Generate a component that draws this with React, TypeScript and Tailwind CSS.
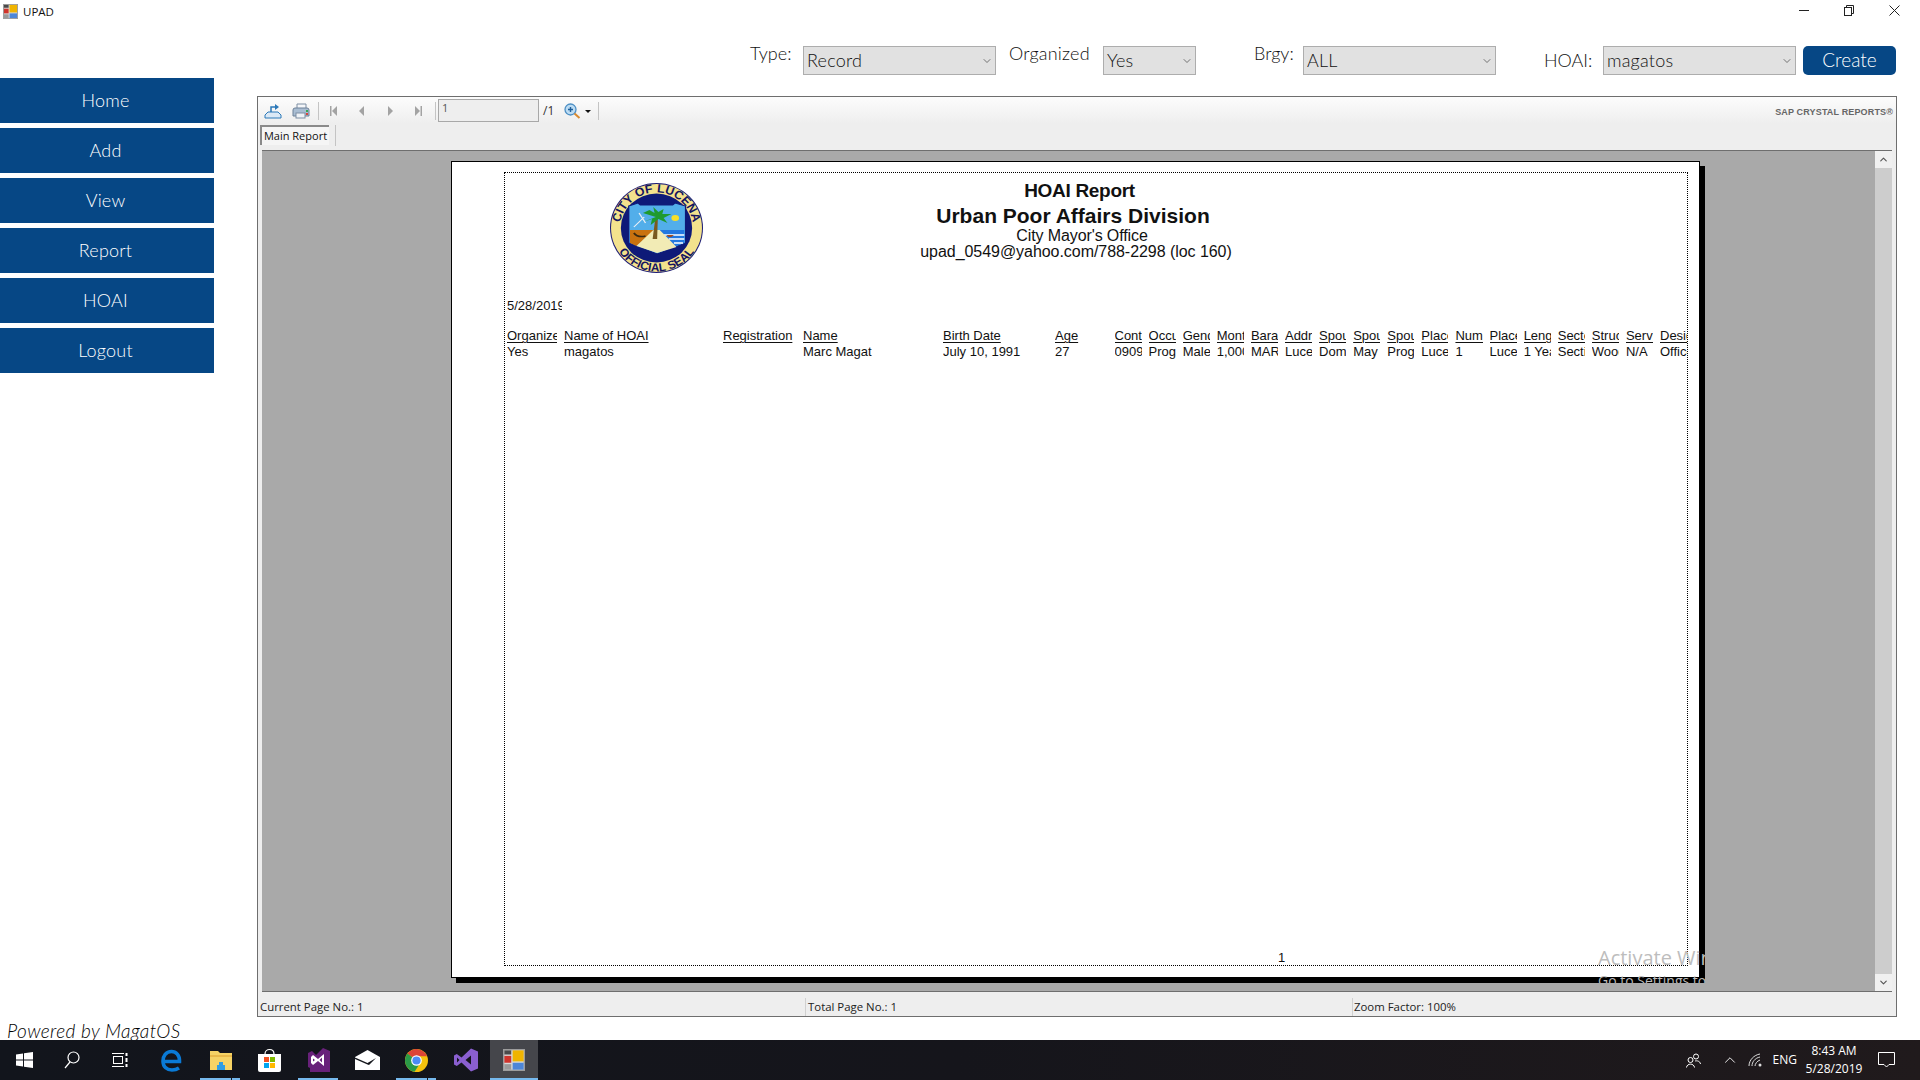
import React from 'react';
import { ChevronDown, ChevronUp } from 'lucide-react';

const navItems = ['Home', 'Add', 'View', 'Report', 'HOAI', 'Logout'];

const reportColumns = [
  ['Organized', 'Yes'],
  ['Name of HOAI', 'magatos'],
  ['Registration', ''],
  ['Name', 'Marc Magat'],
  ['Birth Date', 'July 10, 1991'],
  ['Age', '27'],
  ['Contact', '09091234567'],
  ['Occupation', 'Programmer'],
  ['Gender', 'Male'],
  ['Monthly', '1,000.00'],
  ['Barangay', 'MARKET'],
  ['Address', 'Lucena'],
  ['Spouse', 'Domingo'],
  ['Spouse', 'May'],
  ['Spouse', 'Programmer'],
  ['Place', 'Lucena'],
  ['Number', '1'],
  ['Place', 'Lucena'],
  ['Length', '1 Year'],
  ['Sector', 'Section'],
  ['Structure', 'Wood'],
  ['Service', 'N/A'],
  ['Designation', 'Officer'],
];

const AppIcon = ({ size = 16 }: { size?: number }) => (
  <svg width={size} height={size} viewBox="0 0 16 16">
    <rect x="0.5" y="0.5" width="15" height="15" fill="#d8d8d8" stroke="#9c9c9c" />
    <rect x="1" y="1" width="5" height="3" fill="#4a4a4a" />
    <rect x="1" y="5" width="5" height="5" fill="#d0342c" />
    <rect x="7" y="1" width="8" height="8" fill="#f0b400" />
    <rect x="7" y="10" width="8" height="5" fill="#4d86d8" />
    <rect x="1" y="11" width="5" height="4" fill="#9a9a9a" />
  </svg>
);

const FormSelect = ({ value, className }: { value: string; className: string }) => (
  <div className={`h-[29px] bg-[#e1e1e1] border border-[#adadad] flex items-center justify-between pl-[3px] pr-[2px] text-[18px] font-light text-[#111] ${className}`}>
    <span className="tracking-[0.2px]">{value}</span>
    <ChevronDown size={12} strokeWidth={1.4} className="text-[#444]" />
  </div>
);

const ExportIcon = () => (
  <svg width="18" height="16" viewBox="0 0 18 16" fill="none">
    <path d="M1 12 L4 9 H14 L17 12 V15 H1 Z" fill="#dbe9f6" stroke="#2b78b8" />
    <path d="M7 9 V4 H12" stroke="#2b78b8" strokeWidth="1.5" />
    <path d="M11 1 L15 4 L11 7 Z" fill="#2b78b8" />
  </svg>
);

const PrintIcon = () => (
  <svg width="18" height="16" viewBox="0 0 18 16">
    <path d="M5 1 H14 V6 H5 Z" fill="#f4f6f9" stroke="#7d8ea3" />
    <path d="M1 7 Q1 5 3 5 H15 Q17 5 17 7 V13 H1 Z" fill="#a9bdd2" stroke="#6d8198" />
    <rect x="4" y="10" width="9" height="5" fill="#eef2f6" stroke="#7d8ea3" />
    <rect x="14" y="7" width="2" height="2" fill="#3aa655" />
    <rect x="14" y="10" width="2" height="2" fill="#d8473c" />
  </svg>
);

const NavGlyph = ({ dir, bar }: { dir: 'left' | 'right'; bar?: boolean }) => (
  <svg width="8" height="12" viewBox="0 0 8 12" fill="#a3a3a3">
    {dir === 'left' ? <path d="M7 1 V11 L2 6 Z" /> : <path d="M1 1 V11 L6 6 Z" />}
    {bar && (dir === 'left' ? <rect x="0" y="1" width="1.5" height="10" /> : <rect x="6.5" y="1" width="1.5" height="10" />)}
  </svg>
);

const ZoomIcon = () => (
  <svg width="17" height="16" viewBox="0 0 17 16" fill="none">
    <circle cx="6.5" cy="6.5" r="5.5" fill="#bcdcf3" stroke="#4d8fc4" strokeWidth="1.3" />
    <path d="M4 6.5 H9 M6.5 4 V9" stroke="#1e5f9c" strokeWidth="1.4" />
    <path d="M10.5 10.5 L15.5 15" stroke="#d98a2f" strokeWidth="2" />
  </svg>
);

const CitySeal = () => (
  <svg width="93" height="90" viewBox="1.5 0 90 90" preserveAspectRatio="none" className="shrink-0">
    <defs>
      <path id="sealTop" d="M11 45 A35.5 35.5 0 0 1 82 45" />
      <path id="sealBottom" d="M3 45 A43.5 43.5 0 0 0 90 45" />
    </defs>
    <circle cx="46.5" cy="45" r="45" fill="#1c1c74" />
    <circle cx="46.5" cy="45" r="44" fill="#f3e28d" />
    <circle cx="46.5" cy="45" r="34.5" fill="#0e1a78" />
    <text fontFamily="'Liberation Sans', sans-serif" fontSize="12" fontWeight="700" fill="#14145f">
      <textPath href="#sealTop" startOffset="50%" textAnchor="middle">CITY OF LUCENA</textPath>
    </text>
    <text fontFamily="'Liberation Sans', sans-serif" fontSize="11.5" fontWeight="700" fill="#14145f">
      <textPath href="#sealBottom" startOffset="50%" textAnchor="middle">OFFICIAL SEAL</textPath>
    </text>
    <g transform="translate(46.5 0) scale(1.25 1) translate(-46.5 0)">
      <path d="M25 23 L32 20 L34 22 H59 L61 20 L69 23 V60 L47 71 L25 60 Z" fill="#52aeea" stroke="#0e1a78" />
      <path d="M26 47 H46 L31 63 L26 60 Z" fill="#c9720f" />
      <path d="M48 47 H68 V60 L60 64 Z" fill="#2378e0" />
      <path d="M52 52 H68 M56 56 H68 M60 60 H67" stroke="#fff" strokeWidth="1.5" />
      <path d="M44 47 H49 L62 64 L47 70 L31 63 Z" fill="#f2ebb5" />
      <circle cx="61" cy="35" r="3" fill="#f7e02a" />
      <path d="M45.5 36 L43.5 56 H47 L47.5 36 Z" fill="#7a5a20" />
      <path d="M46 34 L36 30 L41 27 L45 30 L44 24 L48 29 L52 26 L51 31 L58 31 L52 35 L55 40 L48 36 L42 42 L43 36 L36 39 Z" fill="#1f9a2e" />
      <path d="M29 44 L37 34 M33 30 L38 40" stroke="#e8eef6" strokeWidth="1" />
      <path d="M29 50 Q32 55 38 53" stroke="#3b2a10" strokeWidth="1.5" fill="none" />
      <path d="M54 52 H60 L58 54 H56 Z" fill="#a14a20" />
    </g>
  </svg>
);

const WindowsLogo = () => (
  <svg width="17" height="16" viewBox="0 0 17 16" fill="#fff">
    <path d="M0 2.4 L7 1.4 V7.5 H0 Z M8 1.2 L17 0 V7.5 H8 Z M0 8.5 H7 V14.6 L0 13.6 Z M8 8.5 H17 V16 L8 14.8 Z" />
  </svg>
);

const SearchGlyph = () => (
  <svg width="16" height="18" viewBox="0 0 16 18" fill="none" stroke="#fff" strokeWidth="1.2">
    <circle cx="9.5" cy="6.5" r="5.5" />
    <path d="M6 11 L1 17" />
  </svg>
);

const TaskView = () => (
  <svg width="16" height="16" viewBox="0 0 16 16" fill="none" stroke="#fff" strokeWidth="1">
    <rect x="1.5" y="4.5" width="9" height="7" />
    <path d="M0 1.5 H12 M0 14.5 H12" />
    <path d="M14.5 1 V4 M14.5 6 V10 M14.5 12 V15" strokeWidth="2" />
  </svg>
);

const EdgeIcon = () => (
  <svg width="21" height="23" viewBox="0 0 21 23" fill="none">
    <path d="M3 12.5 H18.5 C18.8 6 15 2.5 10.5 2.5 C5 2.5 2 7 2 12 C2 18 6 21 11 21 C14 21 16.5 20 18 19" stroke="#0a7ad6" strokeWidth="3.6" />
  </svg>
);

const ExplorerIcon = () => (
  <svg width="22" height="22" viewBox="0 0 22 22">
    <path d="M0 2 H8 L10 4 H22 V21 H0 Z" fill="#f6d365" />
    <rect x="0" y="6" width="22" height="2" fill="#e9b949" />
    <path d="M7 21 V16 H15 V21 Z" fill="#2f9de3" />
    <rect x="9" y="13" width="4" height="3" fill="#2f9de3" />
  </svg>
);

const StoreIcon = () => (
  <svg width="23" height="24" viewBox="0 0 23 24">
    <path d="M7 6 C7 0 16 0 16 6" fill="none" stroke="#fff" strokeWidth="1.2" />
    <path d="M0 6 H23 V22 Q23 24 21 24 H2 Q0 24 0 22 Z" fill="#fff" />
    <rect x="6" y="9" width="5" height="5" fill="#f25022" />
    <rect x="12" y="9" width="5" height="5" fill="#7fba00" />
    <rect x="6" y="15" width="5" height="5" fill="#00a4ef" />
    <rect x="12" y="15" width="5" height="5" fill="#ffb900" />
  </svg>
);

const VsDarkIcon = () => (
  <svg width="22" height="24" viewBox="0 0 22 24">
    <path d="M15 0 L22 3 V24 H2 V20 L0 19 V5 L4 3 L8 7 Z" fill="#68217a" />
    <path d="M16 6 V18 L10 13 L5 17 L3 15 V9 L5 7 L10 11 Z M14 9.5 L11.5 12 L14 14.5 Z M5 10.5 V13.5 L7 12 Z" fill="#fff" fillRule="evenodd" />
  </svg>
);

const MailIcon = () => (
  <svg width="25" height="20" viewBox="0 0 25 20">
    <path d="M0 7 L12.5 0 L25 7 V20 H0 Z" fill="#fff" />
    <path d="M0 7.5 L12.5 13 L21 8 L14 15 L12.5 14.5 L0 9 Z" fill="#14161c" />
  </svg>
);

const ChromeIcon = () => (
  <svg width="23" height="23" viewBox="0 0 24 24">
    <circle cx="12" cy="12" r="12" fill="#f4c20d" />
    <path d="M12 12 L2.5 4.7 A12 12 0 0 1 23 7.5 L12 7.5 Z" fill="#db4437" />
    <path d="M12 12 L2.5 4.7 A12 12 0 0 0 10 23.8 L15 16 Z" fill="#2a9a47" />
    <circle cx="12" cy="12" r="5.6" fill="#fff" />
    <circle cx="12" cy="12" r="4.3" fill="#4c8bf5" />
  </svg>
);

const VsIcon = () => (
  <svg width="24" height="24" viewBox="0 0 24 24">
    <path d="M17 0.5 L24 3.5 V20.5 L17 23.5 L7.5 14.5 L2.8 18 L0 16.5 V7.5 L2.8 6 L7.5 9.5 Z M17 7.5 L11.5 12 L17 16.5 Z M3 9.5 V14.5 L5.5 12 Z" fill="#8a5fd0" fillRule="evenodd" />
  </svg>
);

const TaskButton = ({ children, running, split }: { children: React.ReactNode; running?: boolean; split?: boolean }) => (
  <div className="relative w-[49px] h-full flex items-center justify-center">
    {children}
    {running && (
      <div className="absolute bottom-0 left-[4px] right-[5px] h-[2px] bg-[#76b9ed]">
        {split && <div className="absolute top-0 bottom-0 right-[8px] w-[1px] bg-[#14161c]" />}
      </div>
    )}
  </div>
);

export default function App() {
  return (
    <div className="w-[1920px] h-[1080px] bg-white flex flex-col overflow-hidden font-['Lato',sans-serif]">
      {/* title bar */}
      <div className="h-[22px] flex items-center pl-[3px] shrink-0">
        <AppIcon size={15} />
        <span className="ml-[5px] mt-[1px] text-[11.5px] text-[#111] font-['Open_Sans',sans-serif]">UPAD</span>
        <div className="ml-auto flex items-center gap-[35px] pr-[20px] mb-[2px]">
          <div className="w-[10px] h-[1px] bg-[#222]" />
          <svg width="10" height="11" viewBox="0 0 10 11" fill="none" stroke="#222">
            <rect x="0.5" y="2.5" width="7" height="8" />
            <path d="M2.5 2.5 V0.5 H9.5 V8.5 H7.5" />
          </svg>
          <svg width="11" height="11" viewBox="0 0 11 11" stroke="#222">
            <path d="M0.5 0.5 L10.5 10.5 M10.5 0.5 L0.5 10.5" />
          </svg>
        </div>
      </div>

      <div className="flex-1 flex min-h-0">
        {/* left menu */}
        <aside className="w-[214px] shrink-0 pt-[56px] flex flex-col">
          <nav className="flex flex-col gap-[5px]">
            {navItems.map((item) => (
              <div key={item} className="h-[45px] bg-[#064785] text-white text-[18px] font-light tracking-[0.2px] pr-[3px] flex items-center justify-center">
                {item}
              </div>
            ))}
          </nav>
          <div className="mt-auto mb-[1px] h-[16px] leading-[16px] pl-[7px] text-[19px] font-light italic tracking-[0.4px] text-black whitespace-nowrap">
            Powered by MagatOS
          </div>
        </aside>

        <main className="ml-[43px] w-[1640px] flex flex-col">
          {/* filters */}
          <div className="mt-[24px] h-[29px] flex pl-[493px] text-[18px] font-light text-[#111] shrink-0">
            <span className="w-[53px] leading-[15px]">Type:</span>
            <FormSelect value="Record" className="w-[193px]" />
            <span className="ml-[13px] w-[94px] leading-[15px] tracking-[0.2px]">Organized</span>
            <FormSelect value="Yes" className="w-[93px]" />
            <span className="ml-[58px] w-[49px] leading-[15px]">Brgy:</span>
            <FormSelect value="ALL" className="w-[193px]" />
            <span className="ml-[48px] w-[59px] leading-[29px]">HOAI:</span>
            <FormSelect value="magatos" className="w-[193px]" />
            <div className="ml-[7px] w-[93px] bg-[#064785] rounded-[5px] text-white text-[19px] flex items-center justify-center">
              Create
            </div>
          </div>

          {/* report viewer */}
          <div className="mt-[21px] h-[921px] border border-[#6e6e6e] bg-[#eeeeee] flex flex-col">
            <div className="h-[27px] shrink-0 bg-gradient-to-b from-[#fcfcfc] to-[#eeeeee] flex items-center pl-[6px] text-[#333]">
              <ExportIcon />
              <div className="ml-[10px]"><PrintIcon /></div>
              <div className="ml-[8px] w-[1px] h-[18px] bg-[#c4c4c4]" />
              <div className="ml-[11px]"><NavGlyph dir="left" bar /></div>
              <div className="ml-[19px]"><NavGlyph dir="left" /></div>
              <div className="ml-[22px]"><NavGlyph dir="right" /></div>
              <div className="ml-[19px]"><NavGlyph dir="right" bar /></div>
              <div className="ml-[13px] w-[1px] h-[18px] bg-[#c4c4c4]" />
              <div className="ml-[2px] w-[101px] h-[23px] border border-[#a8a8a8] bg-[#eeeeee] pl-[3px] text-[11px] leading-[15px] text-[#555] font-['Open_Sans',sans-serif]">1</div>
              <span className="ml-[4px] text-[12px] font-['Open_Sans',sans-serif]">/1</span>
              <div className="ml-[10px]"><ZoomIcon /></div>
              <svg width="6" height="3" viewBox="0 0 6 3" className="ml-[4px] mt-[2px]"><path d="M0 0 H6 L3 3 Z" fill="#111" /></svg>
              <div className="ml-[7px] w-[1px] h-[18px] bg-[#c4c4c4]" />
              <span className="ml-auto mr-[3px] mt-[5px] text-[9px] font-bold tracking-[0.15px] text-[#666] font-['Liberation_Sans',sans-serif] whitespace-nowrap">SAP CRYSTAL REPORTS®</span>
            </div>

            <div className="h-[26px] shrink-0 flex items-start pl-[2px] pt-[1px]">
              <div className="w-[69px] h-[20px] border-l-2 border-t-2 border-[#8a8a8a] bg-[#f5f5f5] text-[11px] leading-[17px] text-center text-[#111] font-['Open_Sans',sans-serif] whitespace-nowrap">
                Main Report
              </div>
              <div className="ml-[6px] w-[1px] h-[21px] bg-[#c4c4c4]" />
            </div>

            <div className="flex-1 min-h-0 ml-[4px] mr-[4px] border-t border-b border-[#6e6e6e] bg-[#a9a9a9] flex">
              <div className="flex-1 min-w-0 pl-[189px] pt-[10px]">
                <div className="relative w-[1254px] h-[822px] overflow-hidden">
                  <div className="w-[1249px] h-[817px] bg-white border border-black shadow-[5px_5px_0_#000] pl-[52px] pt-[10px] font-['Liberation_Sans',sans-serif] text-[#111]">
                    <div className="w-[1184px] h-[794px] border border-dotted border-black flex flex-col">
                      <div className="flex shrink-0">
                        <div className="ml-[105px] mt-[10px]"><CitySeal /></div>
                        <div className="w-[754px] text-center flex flex-col whitespace-nowrap">
                          <div className="mt-[8px] h-[20px] leading-[20px] text-[19px] font-bold tracking-[-0.3px] mr-[1px]">HOAI Report</div>
                          <div className="mt-[3px] mr-[14px] h-[24px] leading-[24px] text-[21px] font-bold">Urban Poor Affairs Division</div>
                          <div className="ml-[4px] h-[16px] leading-[16px] text-[16px] tracking-[-0.1px]">City Mayor's Office</div>
                          <div className="mr-[8px] h-[16px] leading-[16px] text-[16px] tracking-[-0.05px]">upad_0549@yahoo.com/788-2298 (loc 160)</div>
                        </div>
                      </div>

                      <div className="ml-[2px] mt-[25px] w-[55px] h-[16px] leading-[16px] text-[13px] overflow-hidden whitespace-nowrap">5/28/2019</div>

                      <div className="ml-[2px] mt-[14px] grid grid-cols-[50px_152px_73px_133px_105px_52.5px_repeat(17,27.1px)] gap-x-[7px] text-[13px] leading-[16px]">
                        {reportColumns.map(([label], i) => (
                          <div key={`h${i}`} className="h-[16px] overflow-hidden whitespace-nowrap underline decoration-1 underline-offset-[2px]">{label}</div>
                        ))}
                        {reportColumns.map(([, value], i) => (
                          <div key={`v${i}`} className="h-[16px] overflow-hidden whitespace-nowrap">{value}</div>
                        ))}
                      </div>

                      <div className="mt-auto pl-[773px] h-[16px] leading-[17px] text-[13px]">1</div>
                    </div>
                  </div>
                  {/* activation watermark */}
                  <div className="absolute left-[1147px] top-[783px] whitespace-nowrap text-[#bdbdbd] font-['Open_Sans',sans-serif]">
                    <div className="text-[20px] leading-[28px]">Activate Windows</div>
                    <div className="text-[14px] leading-[18px]">Go to Settings to activate Windows.</div>
                  </div>
                </div>
              </div>

              <div className="w-[17px] shrink-0 bg-[#f0f0f0] flex flex-col items-center">
                <div className="h-[17px] flex items-center justify-center"><ChevronUp size={11} strokeWidth={2.5} className="text-[#555]" /></div>
                <div className="w-full flex-1 bg-[#cdcdcd]" />
                <div className="h-[17px] flex items-center justify-center"><ChevronDown size={11} strokeWidth={2.5} className="text-[#555]" /></div>
              </div>
            </div>

            {/* status bar */}
            <div className="h-[24px] shrink-0 flex items-center pl-[2px] pt-[5px] text-[11.4px] text-[#222] font-['Open_Sans',sans-serif] whitespace-nowrap">
              <span className="w-[545px]">Current Page No.: 1</span>
              <div className="w-[1px] h-[18px] bg-[#d0d0d0]" />
              <span className="ml-[2px] w-[544px]">Total Page No.: 1</span>
              <div className="w-[1px] h-[18px] bg-[#d0d0d0]" />
              <span className="ml-[1px]">Zoom Factor: 100%</span>
            </div>
          </div>
        </main>
      </div>

      {/* taskbar */}
      <footer className="h-[40px] shrink-0 bg-gradient-to-r from-[#12151c] via-[#15151b] to-[#201a1c] flex items-center text-white font-['Open_Sans',sans-serif]">
        <div className="w-[48px] h-full flex items-center justify-center"><WindowsLogo /></div>
        <div className="w-[48px] h-full flex items-center justify-center"><SearchGlyph /></div>
        <div className="w-[48px] h-full flex items-center justify-center"><TaskView /></div>
        <div className="ml-[3px] flex h-full">
          <TaskButton><EdgeIcon /></TaskButton>
          <TaskButton running split><ExplorerIcon /></TaskButton>
          <TaskButton><StoreIcon /></TaskButton>
          <TaskButton running><VsDarkIcon /></TaskButton>
          <TaskButton><MailIcon /></TaskButton>
          <TaskButton running split><ChromeIcon /></TaskButton>
          <TaskButton><VsIcon /></TaskButton>
          <div className="relative w-[48px] h-full bg-[#45464b] flex items-center justify-center">
            <AppIcon size={22} />
            <div className="absolute bottom-0 left-0 right-0 h-[2px] bg-[#76b9ed]" />
          </div>
        </div>
        <div className="ml-auto flex items-center h-full">
          <svg width="15" height="15" viewBox="0 0 15 15" fill="none" stroke="#fff" strokeWidth="1">
            <circle cx="10" cy="3.5" r="2.5" />
            <circle cx="4.5" cy="7" r="2.5" />
            <path d="M0.5 14.5 C1 10 8 10 8.5 14.5 M9 8 C11 7.5 14 8 14.5 11" />
          </svg>
          <ChevronUp size={18} strokeWidth={1.2} className="ml-[20px]" />
          <svg width="14" height="14" viewBox="0 0 14 14" fill="none" stroke="#ddd" strokeWidth="1" className="ml-[9px]">
            <path d="M1 13 C1 7 6 2 12 1 M4 13 C4 9 7 5 12 4 M7 13 C7 11 9 8 12 7" />
            <circle cx="12" cy="12" r="1.5" fill="#ddd" stroke="none" />
          </svg>
          <span className="ml-[11px] text-[12px]">ENG</span>
          <div className="ml-[10px] w-[54px] flex flex-col items-center text-[12px] leading-[18px]">
            <span>8:43 AM</span>
            <span>5/28/2019</span>
          </div>
          <svg width="17" height="16" viewBox="0 0 17 16" fill="none" stroke="#fff" className="ml-[17px] mr-[25px]">
            <path d="M0.5 0.5 H16.5 V12.5 H11 L8.5 15 L6 12.5 H0.5 Z" />
          </svg>
        </div>
      </footer>
    </div>
  );
}
